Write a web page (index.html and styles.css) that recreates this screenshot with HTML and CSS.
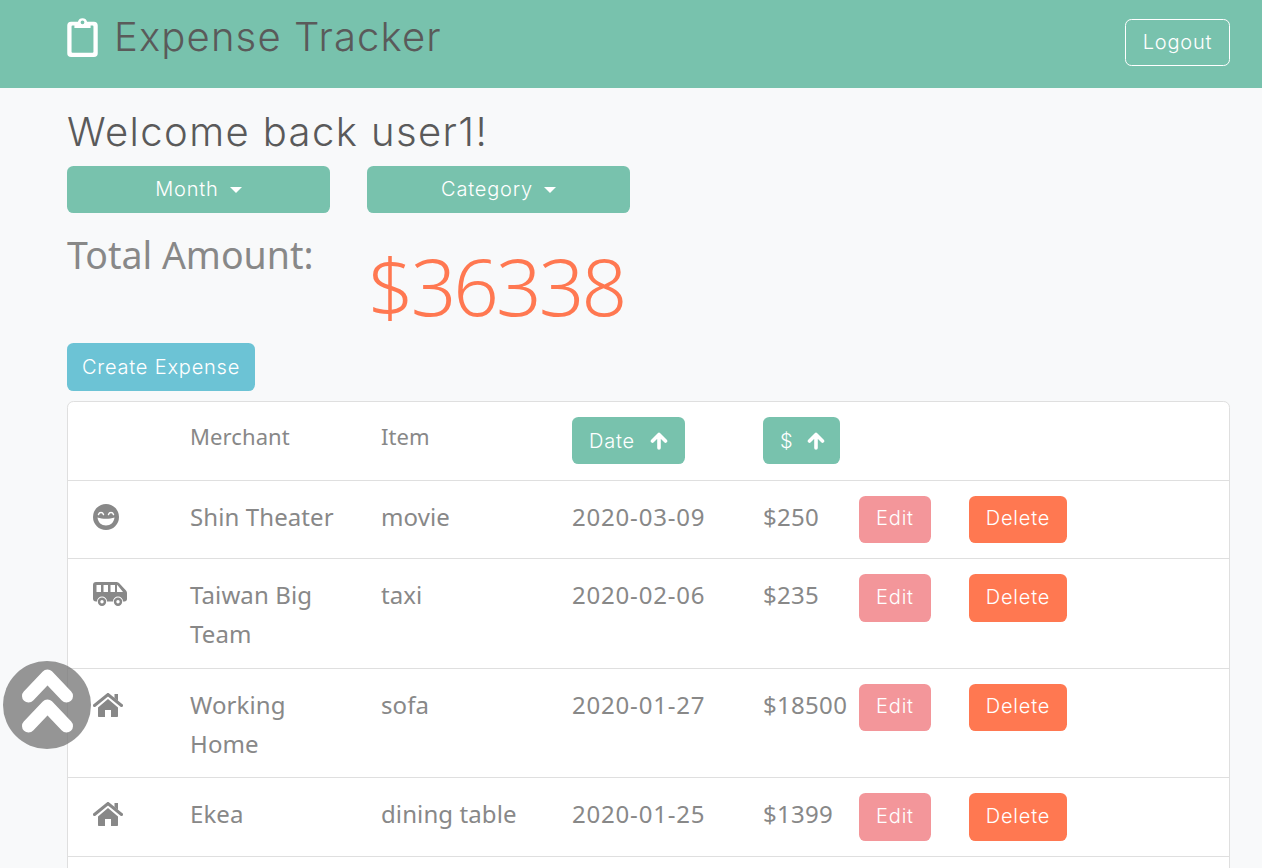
FILE: index.html
```html
<!DOCTYPE html>
<html lang="en">
<head>
<meta charset="utf-8">
<title>Expense Tracker</title>
<link rel="stylesheet" href="styles.css">
</head>
<body>
<header class="navbar">
  <a class="brand" href="#">
    <svg class="brand-icon" viewBox="0 0 32 42" aria-hidden="true"><path fill="#fff" fill-rule="evenodd" d="M4 5h7.200a5 5 0 0 1 9.600 0H28a4 4 0 0 1 4 4v29a4 4 0 0 1-4 4H4a4 4 0 0 1-4-4V9a4 4 0 0 1 4-4zM16 3.600a2 2 0 1 0 0 4 2 2 0 0 0 0-4zM4.500 10v26.500a1 1 0 0 0 1 1h21a1 1 0 0 0 1-1V10a1 1 0 0 0-1-1h-2v2.500H7.500V9h-2a1 1 0 0 0-1 1z"/></svg>
    <span>Expense Tracker</span>
  </a>
  <button class="btn btn-outline">Logout</button>
</header>
<main class="container">
  <h2 class="welcome">Welcome back user1!</h2>
  <div class="filters">
    <button class="btn btn-primary btn-filter">Month<i class="caret"></i></button>
    <button class="btn btn-primary btn-filter">Category<i class="caret"></i></button>
  </div>
  <div class="total">
    <h3 class="total-label">Total Amount:</h3>
    <div class="total-value">$36338</div>
  </div>
  <button class="btn btn-info">Create Expense</button>
  <div class="card">
    <table class="table">
      <colgroup>
        <col class="c-icon"><col class="c-col"><col class="c-col"><col class="c-col"><col class="c-amt"><col class="c-edit"><col>
      </colgroup>
      <thead>
        <tr>
          <th></th>
          <th class="th-text">Merchant</th>
          <th class="th-text">Item</th>
          <th><button class="btn btn-primary btn-date">Date<svg class="arrow" viewBox="0 0 18 18" aria-hidden="true"><path d="M9 16V3M2.500 9 9 2.500 15.500 9"/></svg></button></th>
          <th><button class="btn btn-primary btn-amount">$<svg class="arrow" viewBox="0 0 18 18" aria-hidden="true"><path d="M9 16V3M2.500 9 9 2.500 15.500 9"/></svg></button></th>
          <th></th>
          <th></th>
        </tr>
      </thead>
      <tbody>
        <tr>
          <td><svg class="cat" viewBox="0 0 26 26" aria-hidden="true"><path fill-rule="evenodd" d="M13 0a13 13 0 1 1 0 26 13 13 0 0 1 0-26zM4.500 13.500c.5 5 4 8 8.500 8s8-3 8.500-8c-2.500 1-5.500 1.300-8.500 1.300s-6-.3-8.500-1.300z"/><path class="smile" d="M5.500 10.500c1-2.600 4-2.600 5 0M15.500 10.500c1-2.600 4-2.600 5 0"/></svg></td>
          <td>Shin Theater</td><td>movie</td><td class="date">2020-03-09</td><td class="amount">$250</td>
          <td class="action"><button class="btn btn-edit">Edit</button></td>
          <td class="action"><button class="btn btn-delete">Delete</button></td>
        </tr>
        <tr>
          <td><svg class="cat cat-bus" viewBox="0 0 34 24" aria-hidden="true"><path fill-rule="evenodd" d="M3 0h20c1.500 0 2.500.5 3.500 1.500L33 8.500c.7.7 1 1.500 1 2.500v6c0 1.500-1 2.500-2.500 2.500H30a5 5 0 0 0-10 0h-6a5 5 0 0 0-10 0H3c-2 0-3-1-3-3V3c0-2 1-3 3-3zM3.500 3v7h4.500V3zM10.500 3v7h4.500V3zM17.500 3v7h4.500V3zM24 3v7h6l-5-6.300c-.3-.4-.6-.7-1-.7z"/><path fill-rule="evenodd" d="M9 15.500a4.200 4.200 0 1 1 0 8.400 4.200 4.200 0 0 1 0-8.400zM9 18a1.700 1.700 0 1 0 0 3.400A1.700 1.700 0 0 0 9 18zM25 15.500a4.200 4.200 0 1 1 0 8.400 4.200 4.200 0 0 1 0-8.400zM25 18a1.700 1.700 0 1 0 0 3.400 1.700 1.700 0 0 0 0-3.400z"/></svg></td>
          <td>Taiwan Big Team</td><td>taxi</td><td class="date">2020-02-06</td><td class="amount">$235</td>
          <td class="action"><button class="btn btn-edit">Edit</button></td>
          <td class="action"><button class="btn btn-delete">Delete</button></td>
        </tr>
        <tr>
          <td><svg class="cat cat-home" viewBox="0 0 30 24" aria-hidden="true"><path d="M15 6 5 14.500V23c0 .6.400 1 1 1h6v-7h6v7h6c.6 0 1-.4 1-1v-8.500z"/><path class="roof" d="M1.500 12.500 15 1.500l13.500 11"/><path d="M21.500 1H25v7l-3.500-3z"/></svg></td>
          <td>Working Home</td><td>sofa</td><td class="date">2020-01-27</td><td class="amount">$18500</td>
          <td class="action"><button class="btn btn-edit">Edit</button></td>
          <td class="action"><button class="btn btn-delete">Delete</button></td>
        </tr>
        <tr>
          <td><svg class="cat cat-home" viewBox="0 0 30 24" aria-hidden="true"><path d="M15 6 5 14.500V23c0 .6.400 1 1 1h6v-7h6v7h6c.6 0 1-.4 1-1v-8.500z"/><path class="roof" d="M1.500 12.500 15 1.500l13.500 11"/><path d="M21.500 1H25v7l-3.500-3z"/></svg></td>
          <td>Ekea</td><td>dining table</td><td class="date">2020-01-25</td><td class="amount">$1399</td>
          <td class="action"><button class="btn btn-edit">Edit</button></td>
          <td class="action"><button class="btn btn-delete">Delete</button></td>
        </tr>
        <tr class="row-empty"><td colspan="7"></td></tr>
      </tbody>
    </table>
  </div>
</main>
<a class="to-top" href="#" aria-label="Back to top">
  <svg viewBox="0 0 88 88" aria-hidden="true"><path d="M25.500 35 44.500 15 63.500 35M25.500 65 44.500 45 63.500 65"/></svg>
</a>
</body>
</html>
```
FILE: styles.css
```css
* { box-sizing: border-box; }
html, body { height: 100%; overflow: hidden; }
body {
  margin: 0;
  background: #f8f9fa;
  color: #888;
  font-family: "Noto Sans", "Open Sans", sans-serif;
  font-size: 24px;
}
.navbar {
  height: 88px;
  background: #78c2ad;
  display: flex;
  justify-content: space-between;
  align-items: flex-start;
  padding: 16px 32px 0 67px;
}
.brand {
  display: flex;
  align-items: center;
  gap: 16px;
  color: #5a5a5a;
  text-decoration: none;
  font-family: Inter, "Liberation Sans", sans-serif;
  font-size: 40px;
  font-weight: 300;
  letter-spacing: 1.150px;
  line-height: 42px;
}
.brand-icon { width: 31px; height: 40px; flex: none; }
.btn {
  border: 1px solid transparent;
  border-radius: 6.400px;
  font-family: Inter, "Liberation Sans", sans-serif;
  font-size: 20px;
  font-weight: 300;
  letter-spacing: .8px;
  line-height: 30px;
  color: #fff;
  padding: 0 0 2px;
  background: none;
  white-space: nowrap;
}
.btn-outline { border-color: #fff; height: 47px; width: 105px; margin-top: 3px; }
.btn-primary { background: #78c2ad; }
.btn-info { background: #6cc3d5; display: block; height: 48px; width: 188px; padding: 0; }
.btn-edit { background: #f3969a; height: 47.500px; width: 72px; }
.btn-delete { background: #ff7851; height: 47.500px; width: 98px; }
.container { padding: 0 32px 0 67px; }
.welcome {
  margin: 0;
  padding-top: 20px;
  height: 78px;
  color: #5a5a5a;
  font-family: Inter, "Liberation Sans", sans-serif;
  font-size: 40px;
  font-weight: 300;
  letter-spacing: 1.400px;
  line-height: 48px;
}
.filters { display: flex; gap: 37px; }
.btn-filter { width: 263px; height: 47px; }
.caret {
  display: inline-block;
  margin-left: 11px;
  vertical-align: 3px;
  border-top: 6px solid #fff;
  border-left: 6px solid transparent;
  border-right: 6px solid transparent;
}
.total { display: flex; height: 130px; }
.total-label {
  width: 301px;
  margin: 0;
  padding-top: 20px;
  font-size: 37.500px;
  font-weight: 400;
  line-height: 44px;
}
.total-value {
  color: #ff7851;
  font-size: 80px;
  font-weight: 300;
  letter-spacing: -3px;
  line-height: 96px;
  padding-top: 24px;
}
.card {
  margin-top: 10px;
  background: #fff;
  border: 1px solid #dfdfdf;
  border-radius: 6.400px;
  overflow: hidden;
}
.table { width: 100%; border-collapse: collapse; table-layout: fixed; }
.c-icon { width: 110px; }
.c-col { width: 191px; }
.c-amt { width: 96px; }
.c-edit { width: 110px; }
th, td {
  padding: 16px 12px 14px;
  vertical-align: top;
  text-align: left;
  font-weight: 400;
  line-height: 39.200px;
  letter-spacing: .1px;
  border-top: 1px solid #dfdfdf;
}
td.action { padding: 15px 12px; }
thead th { border-top: 0; padding: 15px 12px 15.700px; }
.th-text { font-size: 22px; }
th .btn { display: flex; align-items: center; height: 47px; padding: 0 16px; }
th .btn-amount { padding-right: 14px; }
.date { letter-spacing: .8px; }
.amount { letter-spacing: .3px; }
.arrow {
  width: 18px; height: 18px; margin-left: 14px;
  fill: none; stroke: #fff; stroke-width: 3.600;
  stroke-linecap: round; stroke-linejoin: round;
}
.btn-date .arrow { margin-left: 15px; }
.cat { display: block; width: 26px; height: 26px; margin: 7px 0 0 13px; fill: #888; }
.cat-bus { width: 34px; height: 24px; margin-top: 7px; }
.cat-home { width: 30px; height: 24px; margin-top: 8px; }
.smile { fill: none; stroke: #fff; stroke-width: 1.500; stroke-linecap: round; }
.roof { fill: none; stroke: #888; stroke-width: 3; stroke-linecap: round; }
.row-empty td { height: 40px; padding: 0; }
.to-top {
  position: fixed;
  left: 3px;
  top: 661px;
  width: 88px;
  height: 88px;
  border-radius: 50%;
  background: rgba(120, 120, 120, .78);
}
.to-top svg {
  display: block; width: 88px; height: 88px;
  fill: none; stroke: #fff; stroke-width: 13;
  stroke-linecap: round; stroke-linejoin: round;
}
```
